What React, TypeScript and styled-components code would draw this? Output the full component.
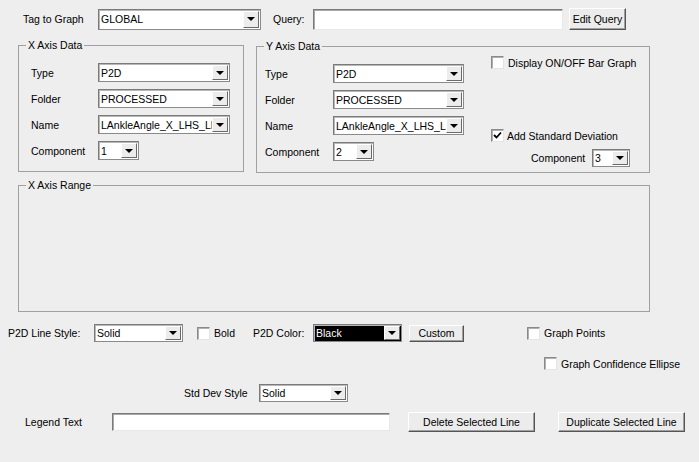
import React from 'react'
import styled, { createGlobalStyle } from 'styled-components'

const GlobalStyle = createGlobalStyle`
  html, body {
    margin: 0;
    padding: 0;
    background: #eeeeee;
  }
  body {
    font-family: "Liberation Sans", Arial, sans-serif;
    font-size: 10.5px;
    color: #000;
  }
`

const Window = styled.div`
  width: 699px;
  height: 462px;
  background: #eeeeee;
  display: flex;
  flex-direction: column;
  overflow: hidden;
`

const Row = styled.div<{ $mt?: number; $pl?: number; $h?: number }>`
  display: flex;
  align-items: center;
  margin-top: ${(p) => p.$mt ?? 0}px;
  padding-left: ${(p) => p.$pl ?? 0}px;
  height: ${(p) => (p.$h ? `${p.$h}px` : 'auto')};
`

const Label = styled.span<{ $w?: number; $ml?: number }>`
  display: inline-block;
  width: ${(p) => (p.$w ? `${p.$w}px` : 'auto')};
  margin-left: ${(p) => p.$ml ?? 0}px;
  white-space: nowrap;
  line-height: 12px;
`

const ComboBox = styled.div<{ $w: number; $h: number; $ml?: number; $dark?: boolean }>`
  position: relative;
  box-sizing: border-box;
  width: ${(p) => p.$w}px;
  height: ${(p) => p.$h}px;
  margin-left: ${(p) => p.$ml ?? 0}px;
  border: 1px solid #7a7a7a;
  border-right-color: #8a8a8a;
  border-bottom-color: #8a8a8a;
  box-shadow: inset 1px 1px 0 #b8b8b8;
  background: ${(p) => (p.$dark ? '#000' : '#fff')};
  color: ${(p) => (p.$dark ? '#fff' : '#000')};
  display: flex;
  align-items: center;
  overflow: hidden;
`

const ComboText = styled.span`
  padding-left: 2px;
  white-space: nowrap;
  line-height: 12px;
`

const ArrowButton = styled.div`
  position: absolute;
  top: 1px;
  right: 1px;
  bottom: 1px;
  width: 16px;
  box-sizing: border-box;
  background: #ececec;
  border: 1px solid;
  border-color: #fff #6a6a6a #6a6a6a #fff;
  display: flex;
  align-items: center;
  justify-content: center;
`

const Triangle = styled.div`
  width: 0;
  height: 0;
  border-left: 4px solid transparent;
  border-right: 4px solid transparent;
  border-top: 4px solid #000;
`

const TextBox = styled.div<{ $w: number; $h: number }>`
  box-sizing: border-box;
  width: ${(p) => p.$w}px;
  height: ${(p) => p.$h}px;
  border: 1px solid;
  border-color: #7a7a7a #e8e8e8 #e8e8e8 #7a7a7a;
  box-shadow: inset 1px 1px 0 #a8a8a8;
  background: #fff;
`

const Button = styled.div<{ $w: number; $h: number; $ml?: number }>`
  box-sizing: border-box;
  width: ${(p) => p.$w}px;
  height: ${(p) => p.$h}px;
  margin-left: ${(p) => p.$ml ?? 0}px;
  background: #ececec;
  border: 1px solid;
  border-color: #fff #555 #555 #fff;
  box-shadow: inset -1px -1px 0 #a0a0a0;
  display: flex;
  align-items: center;
  justify-content: center;
  white-space: nowrap;
  line-height: 12px;
`

const CheckBox = styled.div<{ $ml?: number }>`
  box-sizing: border-box;
  width: 13px;
  height: 13px;
  margin-left: ${(p) => p.$ml ?? 0}px;
  background: #fff;
  border: 1px solid;
  border-color: #8a8a8a #e4e4e4 #e4e4e4 #8a8a8a;
  box-shadow: inset 1px 1px 0 #b0b0b0;
  display: flex;
  align-items: center;
  justify-content: center;
  flex: none;
`

const GroupBox = styled.div<{ $w: number; $h: number; $mt?: number; $ml?: number }>`
  position: relative;
  box-sizing: border-box;
  width: ${(p) => p.$w}px;
  height: ${(p) => p.$h}px;
  margin-top: ${(p) => p.$mt ?? 0}px;
  margin-left: ${(p) => p.$ml ?? 0}px;
  border: 1px solid #a0a0a0;
  display: flex;
  align-items: flex-start;
  flex: none;
`

const GroupTitle = styled.span`
  position: absolute;
  top: -7px;
  left: 7px;
  padding: 0 2px;
  background: #eeeeee;
  line-height: 12px;
  white-space: nowrap;
`

const FormColumn = styled.div<{ $pl: number; $pt: number }>`
  display: flex;
  flex-direction: column;
  gap: 7px;
  padding-left: ${(p) => p.$pl}px;
  padding-top: ${(p) => p.$pt}px;
`

const FormRow = styled.div`
  display: flex;
  align-items: center;
  height: 19px;
`

const SideColumn = styled.div`
  display: flex;
  flex-direction: column;
  margin-left: 27px;
  padding-top: 9px;
`

const CheckRow = styled.div<{ $mt?: number }>`
  display: flex;
  align-items: center;
  margin-top: ${(p) => p.$mt ?? 0}px;
`

const GroupRow = styled.div`
  display: flex;
  align-items: flex-start;
  margin-top: 15px;
  padding-left: 18px;
`

function Combo({ w, h = 19, ml, value, dark }: { w: number; h?: number; ml?: number; value: string; dark?: boolean }) {
  return (
    <ComboBox $w={w} $h={h} $ml={ml} $dark={dark}>
      <ComboText>{value}</ComboText>
      <ArrowButton>
        <Triangle />
      </ArrowButton>
    </ComboBox>
  )
}

function Check({ checked, ml }: { checked?: boolean; ml?: number }) {
  return (
    <CheckBox $ml={ml}>
      {checked && (
        <svg width="9" height="9" viewBox="0 0 9 9">
          <path d="M1 4 L3.5 6.5 L8 1.5" stroke="#000" strokeWidth="1.8" fill="none" />
        </svg>
      )}
    </CheckBox>
  )
}

const axisRows = (component: string, labelW: number, comboW: number) => (
  <>
    <FormRow>
      <Label $w={labelW}>Type</Label>
      <Combo w={comboW} value="P2D" />
    </FormRow>
    <FormRow>
      <Label $w={labelW}>Folder</Label>
      <Combo w={comboW} value="PROCESSED" />
    </FormRow>
    <FormRow>
      <Label $w={labelW}>Name</Label>
      <Combo w={comboW} value="LAnkleAngle_X_LHS_LHS" />
    </FormRow>
    <FormRow>
      <Label $w={labelW}>Component</Label>
      <Combo w={41} h={19} value={component} />
    </FormRow>
  </>
)

export default function App() {
  return (
    <>
      <GlobalStyle />
      <Window>
        <Row $mt={8} $pl={23} $h={22}>
          <Label $w={75}>Tag to Graph</Label>
          <Combo w={163} h={21} value="GLOBAL" />
          <Label $w={40} $ml={12}>Query:</Label>
          <TextBox $w={250} $h={21} />
          <Button $w={57} $h={22} $ml={6}>Edit Query</Button>
        </Row>

        <GroupRow>
          <GroupBox $w={226} $h={127}>
            <GroupTitle>X Axis Data</GroupTitle>
            <FormColumn $pl={12} $pt={17}>
              {axisRows('1', 67, 132)}
            </FormColumn>
          </GroupBox>
          <GroupBox $w={394} $h={127} $mt={1} $ml={12}>
            <GroupTitle>Y Axis Data</GroupTitle>
            <FormColumn $pl={8} $pt={17}>
              {axisRows('2', 68, 131)}
            </FormColumn>
            <SideColumn>
              <CheckRow>
                <Check />
                <Label $ml={4}>Display ON/OFF Bar Graph</Label>
              </CheckRow>
              <CheckRow $mt={60}>
                <Check checked />
                <Label $ml={3}>Add Standard Deviation</Label>
              </CheckRow>
              <CheckRow $mt={7}>
                <Label $w={61} $ml={40}>Component</Label>
                <Combo w={38} h={18} value="3" />
              </CheckRow>
            </SideColumn>
          </GroupBox>
        </GroupRow>

        <GroupBox $w={632} $h={127} $mt={12} $ml={18}>
          <GroupTitle>X Axis Range</GroupTitle>
        </GroupBox>

        <Row $mt={12} $pl={8} $h={18}>
          <Label $w={86}>P2D Line Style:</Label>
          <Combo w={89} h={18} value="Solid" />
          <Check ml={14} />
          <Label $w={39} $ml={4}>Bold</Label>
          <Label $w={60}>P2D Color:</Label>
          <Combo w={89} h={18} value="Black" dark />
          <Button $w={55} $h={17} $ml={7}>Custom</Button>
          <Check ml={63} />
          <Label $ml={4}>Graph Points</Label>
        </Row>

        <Row $mt={15} $pl={544} $h={13}>
          <Check />
          <Label $ml={4}>Graph Confidence Ellipse</Label>
        </Row>

        <Row $mt={14} $pl={184} $h={18}>
          <Label $w={75}>Std Dev Style</Label>
          <Combo w={89} h={18} value="Solid" />
        </Row>

        <Row $mt={10} $pl={25} $h={20}>
          <Label $w={87}>Legend Text</Label>
          <TextBox $w={278} $h={18} />
          <Button $w={127} $h={20} $ml={18}>Delete Selected Line</Button>
          <Button $w={127} $h={20} $ml={23}>Duplicate Selected Line</Button>
        </Row>
      </Window>
    </>
  )
}
